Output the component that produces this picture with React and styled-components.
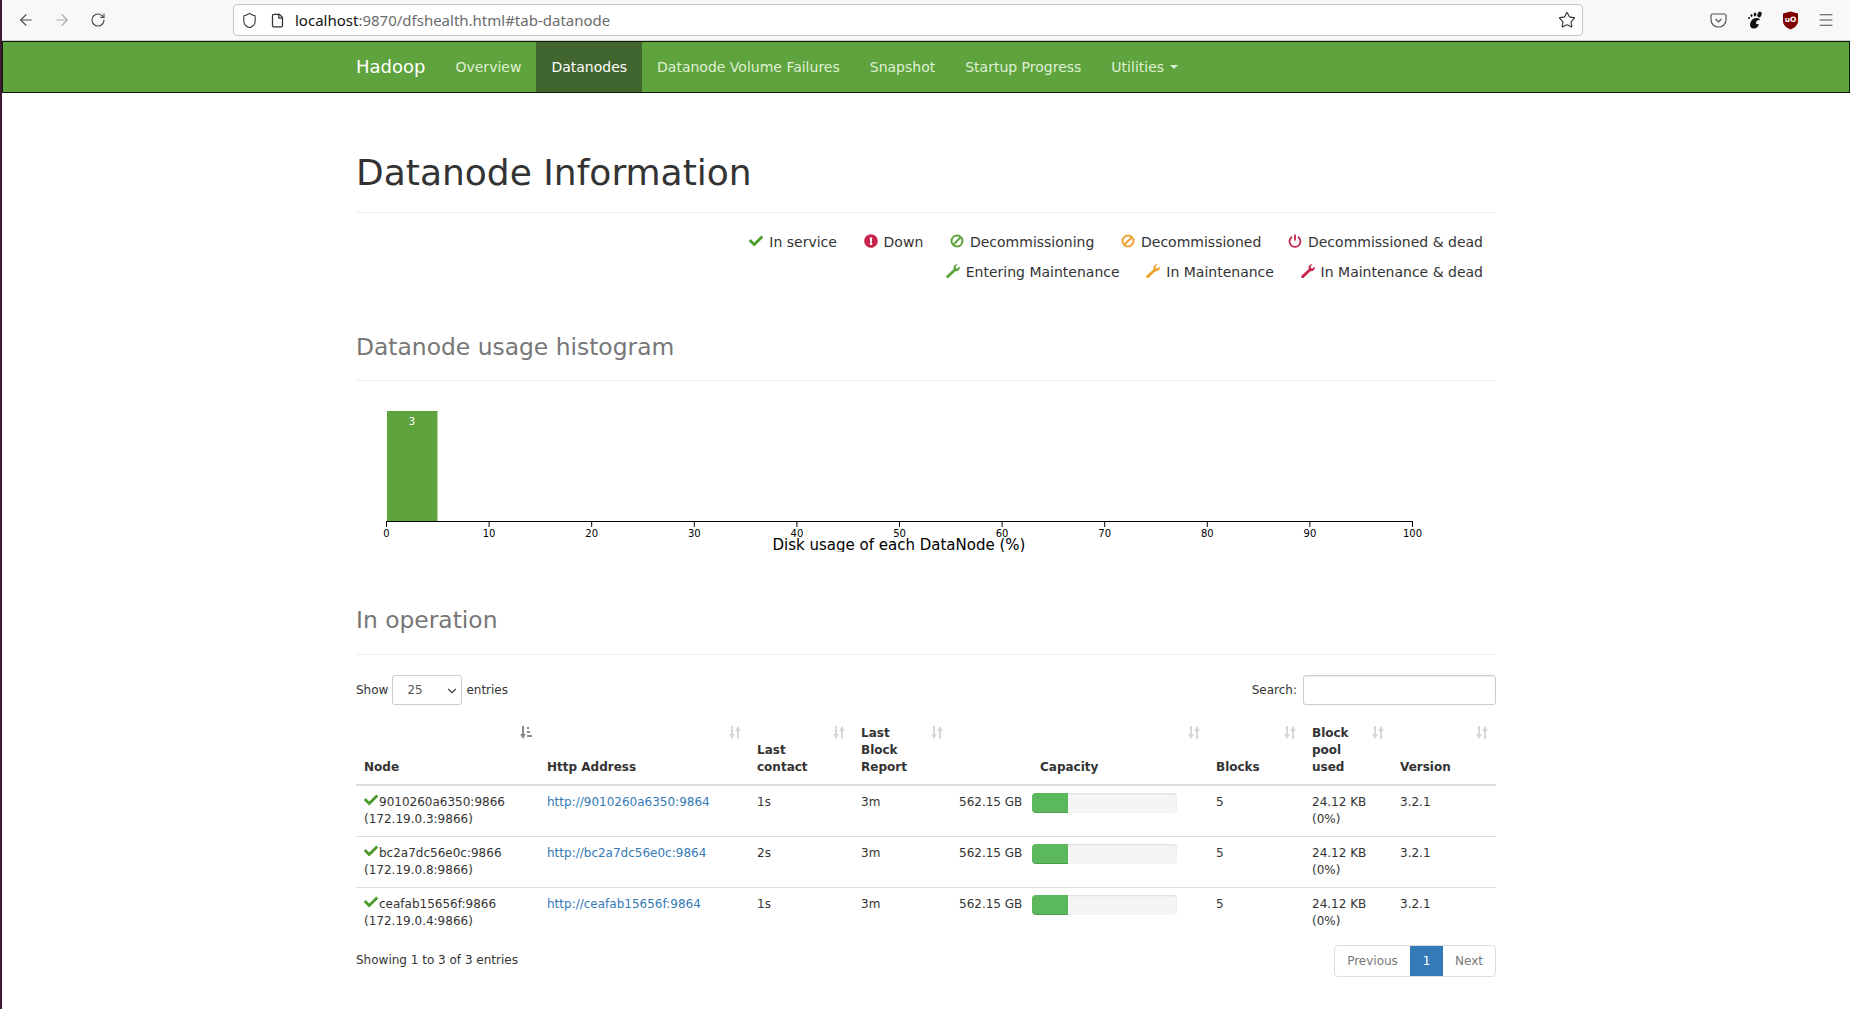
import React from 'react'
import styled, { createGlobalStyle } from 'styled-components'
import { ArrowLeft, ArrowRight, RotateCw, Shield, File, Star, Menu, ChevronDown } from 'lucide-react'
import { FaCheck, FaExclamationCircle } from 'react-icons/fa'

const GlobalStyle = createGlobalStyle`
  html, body { margin: 0; padding: 0; background: #fff; }
  body {
    font-family: "DejaVu Sans", sans-serif;
    font-size: 12px;
    line-height: 17px;
    color: #333;
    overflow: hidden;
  }
  * { box-sizing: border-box; }
`

const Frame = styled.div`
  height: 1009px;
  border-left: 2px solid #3c1a30;
  overflow: hidden;
`

const Browser = styled.div`
  height: 41px;
  background: #f8f8f8;
  border-bottom: 1px solid #cfcfcf;
  display: flex;
  align-items: center;
  padding-left: 6px;
  padding-right: 14px;
`

const ToolButton = styled.div`
  width: 36px;
  height: 30px;
  display: flex;
  align-items: center;
  justify-content: center;
  color: ${p => (p.$dim ? '#a9a9ab' : '#4a4a4f')};
`

const UrlBar = styled.div`
  margin-left: 117px;
  width: 1350px;
  height: 32px;
  background: #fff;
  border: 1px solid #c8c8c8;
  border-radius: 4px;
  display: flex;
  align-items: center;
  gap: 12px;
  padding: 0 6px 0 7px;
  color: #333;
`

const UrlText = styled.div`
  margin-left: -2px;
  flex: 1;
  font-family: "Noto Sans", sans-serif;
  font-size: 15px;
  color: #6b6b6b;
  span { color: #111; }
`

const ExtIcons = styled.div`
  margin-left: auto;
  display: flex;
  align-items: center;
  gap: 16px;
  color: #4a4a4f;
`

const ExtIcon = styled.div`
  width: 20px;
  height: 20px;
  display: flex;
  align-items: center;
  justify-content: center;
`

const Navbar = styled.nav`
  height: 52px;
  background: #5fa33e;
  border: 1px solid #0e1a08;
`

const Container = styled.div`
  width: 1170px;
  margin: 0 auto;
  padding: 0 15px;
`

const NavRow = styled.div`
  display: flex;
  height: 50px;
  align-items: stretch;
`

const Brand = styled.a`
  font-size: 18px;
  line-height: 50px;
  color: #fff;
  margin-right: 15px;
`

const NavItem = styled.a`
  padding: 0 15px;
  line-height: 50px;
  font-size: 14px;
  color: ${p => (p.$active ? '#fff' : '#dff0d2')};
  background: ${p => (p.$active ? '#41652f' : 'transparent')};
  display: flex;
  align-items: center;
`

const Caret = styled.span`
  display: inline-block;
  margin-left: 6px;
  width: 0;
  height: 0;
  border-top: 4px solid #dff0d2;
  border-left: 4px solid transparent;
  border-right: 4px solid transparent;
`

const PageTitle = styled.h1`
  font-size: 36px;
  font-weight: 400;
  line-height: 40px;
  margin: 0;
  padding: 60px 0 19px;
  border-bottom: 1px solid #eee;
  color: #333;
`

const Legend = styled.ul`
  list-style: none;
  margin: 0;
  padding: 20px 13px 0 0;
  display: flex;
  flex-direction: column;
  align-items: flex-end;
  gap: 11px;
`

const LegendRow = styled.li`
  display: flex;
  gap: 26.7px;
  height: 19px;
  align-items: center;
`

const LegendItem = styled.span`
  display: flex;
  align-items: center;
  gap: 6px;
  font-size: 14px;
  color: #333;
  svg { color: ${p => p.$color}; position: relative; top: -2px; }
`

const SectionTitle = styled.h3`
  font-size: 23.4px;
  font-weight: 400;
  line-height: 26px;
  color: #777;
  margin: 0;
  padding: ${p => p.$top}px 0 ${p => p.$bottom}px;
  border-bottom: 1px solid #eee;
`

const Histogram = styled.svg`
  display: block;
  margin-top: 17px;
  width: 1140px;
  height: 154px;
  font-family: "DejaVu Sans", sans-serif;
`

const Controls = styled.div`
  margin-top: 20px;
  display: flex;
  justify-content: space-between;
  align-items: center;
  height: 30px;
`

const ControlLabel = styled.label`
  display: flex;
  align-items: center;
  gap: 4px;
  line-height: 15px;
  position: relative;
`

const SelectBox = styled.div`
  position: relative;
  width: 70px;
  height: 30px;
  border: 1px solid #ccc;
  border-radius: 3px;
  padding-left: 14px;
  line-height: 29px;
  color: #555;
  svg { position: absolute; right: 2px; top: 8px; color: #444; }
`

const SearchInput = styled.input`
  width: 193px;
  height: 30px;
  border: 1px solid #ccc;
  border-radius: 3px;
  margin-left: 2px;
  box-shadow: inset 0 1px 1px rgba(0, 0, 0, 0.075);
`

const Table = styled.table`
  margin-top: 12px;
  width: 1140px;
  table-layout: fixed;
  border-collapse: collapse;
`

const Th = styled.th`
  position: relative;
  padding: 8px;
  padding-left: ${p => p.$indent || 8}px;
  text-align: left;
  vertical-align: bottom;
  font-weight: 700;
  border-bottom: 2px solid #ddd;
`

const SortIcon = styled.svg`
  position: absolute;
  top: 9px;
  right: ${p => (p.$on ? 7 : 8)}px;
  color: ${p => (p.$on ? '#8a8a8a' : '#d6d6d6')};
`

const Td = styled.td`
  padding: 8px;
  vertical-align: top;
  border-bottom: ${p => (p.$last ? 'none' : '1px solid #ddd')};
`

const NodeCheck = styled(FaCheck)`
  color: #4c9a2a;
  margin-right: 1px;
  vertical-align: -2px;
  position: relative;
  top: -1px;
`

const Link = styled.a`
  color: #337ab7;
`

const CapacityCell = styled.div`
  display: flex;
  gap: 10px;
`

const Progress = styled.div`
  width: 145px;
  height: 20px;
  background: #f5f5f5;
  border-radius: 4px;
  overflow: hidden;
  box-shadow: inset 0 1px 2px rgba(0, 0, 0, 0.1);
  margin-top: -1px;
`

const ProgressFill = styled.div`
  height: 100%;
  background: #5cb85c;
  box-shadow: inset 0 -1px 0 rgba(0, 0, 0, 0.15);
`

const Footer = styled.div`
  display: flex;
  justify-content: space-between;
  align-items: flex-start;
  margin-top: 7px;
`

const FooterInfo = styled.div`
  padding-top: 7px;
`

const Pagination = styled.div`
  display: flex;
  height: 32px;
  border: 1px solid #ddd;
  border-radius: 4px;
`

const PageLink = styled.a`
  display: flex;
  align-items: center;
  justify-content: center;
  width: ${p => p.$w}px;
  color: ${p => (p.$active ? '#fff' : '#777')};
  background: ${p => (p.$active ? '#337ab7' : 'transparent')};
`

const nodes = [
  { name: '9010260a6350', ip: '172.19.0.3', contact: '1s', used: 24.5 },
  { name: 'bc2a7dc56e0c', ip: '172.19.0.8', contact: '2s', used: 24.5 },
  { name: 'ceafab15656f', ip: '172.19.0.4', contact: '1s', used: 24.5 },
]

const columns = [
  { w: 183, label: ['Node'], on: true },
  { w: 210, label: ['Http Address'] },
  { w: 104, label: ['Last', 'contact'] },
  { w: 98, label: ['Last', 'Block', 'Report'] },
  { w: 257, label: ['Capacity'], indent: 89 },
  { w: 96, label: ['Blocks'] },
  { w: 88, label: ['Block', 'pool', 'used'] },
  { w: 104, label: ['Version'] },
]

const ticks = [0, 10, 20, 30, 40, 50, 60, 70, 80, 90, 100]

function Sort({ on }) {
  return (
    <SortIcon $on={on} width="13" height="13" viewBox="0 0 13 13" fill="currentColor">
      <path d="M3 0h2v8h2l-3 5-3-5h2z" />
      {on ? (
        <path d="M8 1h2v2H8zM8 5h3v2H8zM8 9h5v2H8z" />
      ) : (
        <path d="M9 13h2V5h2l-3-5-3 5h2z" />
      )}
    </SortIcon>
  )
}

function BanIcon() {
  return (
    <svg width="14" height="14" viewBox="0 0 14 14" fill="none" stroke="currentColor" strokeWidth="2">
      <circle cx="7" cy="7" r="5.500" />
      <path d="M3 11L11 3" />
    </svg>
  )
}

function PowerIcon() {
  return (
    <svg width="14" height="14" viewBox="0 0 14 14" fill="none" stroke="currentColor" strokeWidth="1.8">
      <path d="M4 2.800a5.500 5.500 0 1 0 6 0" />
      <path d="M7 0.500V6.500" />
    </svg>
  )
}

function WrenchIcon() {
  return (
    <svg width="14" height="14" viewBox="0 0 14 14" fill="currentColor">
      <path d="M11.500 0a3.800 3.800 0 0 0-3.700 5L.4 11.800a1.500 1.500 0 0 0 2 2.100L9.400 7.200a3.800 3.800 0 0 0 4.400-4.700L11.600 4.600 10 4.200 9.600 2.600z" />
    </svg>
  )
}

function PocketIcon() {
  return (
    <svg width="17" height="17" viewBox="0 0 17 17" fill="none" stroke="#55555a" strokeWidth="1.2">
      <path d="M2.5 2h12a1.5 1.5 0 0 1 1.5 1.5V8a7.5 7 0 0 1-15 0V3.5A1.5 1.5 0 0 1 2.5 2z" />
      <path d="M5.5 7l3 3 3-3" />
    </svg>
  )
}

function FootIcon() {
  return (
    <svg width="17" height="19" viewBox="0 0 17 19" fill="#111">
      <path d="M7 8c3-2 7-1 7 1-2 0-4 .5-4 3 0 1.500 2 1.500 3 1-.5 3-3 5-6 4.500C3 17 3 11 7 8z" />
      <ellipse cx="13.500" cy="3.500" rx="2" ry="3" transform="rotate(20 13.500 3.500)" />
      <ellipse cx="9" cy="3.500" rx="1.300" ry="2" />
      <ellipse cx="5.500" cy="4.500" rx="1" ry="1.500" />
      <circle cx="3" cy="7" r="1" />
    </svg>
  )
}

function OriginIcon() {
  return (
    <svg width="17" height="19" viewBox="0 0 17 19">
      <path d="M8.500 0.500L16 2.500V10c0 4-3.500 7-7.500 8.500C4.500 17 1 14 1 10V2.500z" fill="#800000" />
      <text x="8.500" y="11" textAnchor="middle" fontSize="7.500" fontWeight="700" fill="#fff" fontFamily="DejaVu Sans">uO</text>
    </svg>
  )
}

export default function App() {
  return (
    <Frame>
      <GlobalStyle />
      <Browser>
        <ToolButton><ArrowLeft size={18} strokeWidth={1.5} /></ToolButton>
        <ToolButton $dim><ArrowRight size={18} strokeWidth={1.5} /></ToolButton>
        <ToolButton><RotateCw size={16} strokeWidth={1.7} /></ToolButton>
        <UrlBar>
          <Shield size={17} strokeWidth={1.5} />
          <File size={15} strokeWidth={2} />
          <UrlText><span>localhost</span>:9870/dfshealth.html#tab-datanode</UrlText>
          <Star size={18} strokeWidth={1.5} />
        </UrlBar>
        <ExtIcons>
          <ExtIcon><PocketIcon /></ExtIcon>
          <ExtIcon><FootIcon /></ExtIcon>
          <ExtIcon><OriginIcon /></ExtIcon>
          <ExtIcon><Menu size={18} strokeWidth={1.4} /></ExtIcon>
        </ExtIcons>
      </Browser>

      <Navbar>
        <Container>
          <NavRow>
            <Brand>Hadoop</Brand>
            <NavItem>Overview</NavItem>
            <NavItem $active>Datanodes</NavItem>
            <NavItem>Datanode Volume Failures</NavItem>
            <NavItem>Snapshot</NavItem>
            <NavItem>Startup Progress</NavItem>
            <NavItem>Utilities<Caret /></NavItem>
          </NavRow>
        </Container>
      </Navbar>

      <Container>
        <PageTitle>Datanode Information</PageTitle>
        <Legend>
          <LegendRow>
            <LegendItem $color="#4c9a2a"><FaCheck size={14} />In service</LegendItem>
            <LegendItem $color="#c7254e"><FaExclamationCircle size={14} />Down</LegendItem>
            <LegendItem $color="#5fa33e"><BanIcon />Decommissioning</LegendItem>
            <LegendItem $color="#f0a030"><BanIcon />Decommissioned</LegendItem>
            <LegendItem $color="#c7254e"><PowerIcon />Decommissioned &amp; dead</LegendItem>
          </LegendRow>
          <LegendRow>
            <LegendItem $color="#5fa33e"><WrenchIcon />Entering Maintenance</LegendItem>
            <LegendItem $color="#f0a030"><WrenchIcon />In Maintenance</LegendItem>
            <LegendItem $color="#c7254e"><WrenchIcon />In Maintenance &amp; dead</LegendItem>
          </LegendRow>
        </Legend>

        <SectionTitle $top={52} $bottom={20}>Datanode usage histogram</SectionTitle>
        <Histogram viewBox="0 0 1140 154">
          <rect x="31" y="13" width="50.500" height="110" fill="#5fa33e" />
          <text x="56" y="27" textAnchor="middle" fontSize="10" fill="#fff">3</text>
          <path d="M30.500 129V123.500H1056.500V129" fill="none" stroke="#000" />
          {ticks.map(t => (
            <g key={t}>
              <line x1={30.5 + t * 10.26} x2={30.5 + t * 10.26} y1="123" y2="129" stroke="#000" />
              <text x={30.5 + t * 10.26} y="139" textAnchor="middle" fontSize="10" fill="#000">{t}</text>
            </g>
          ))}
          <text x="543" y="152" textAnchor="middle" fontSize="15" fill="#000">Disk usage of each DataNode (%)</text>
        </Histogram>

        <SectionTitle $top={55} $bottom={21}>In operation</SectionTitle>
        <Controls>
          <ControlLabel>
            Show
            <SelectBox>25<ChevronDown size={14} /></SelectBox>
            entries
          </ControlLabel>
          <ControlLabel>
            Search:
            <SearchInput />
          </ControlLabel>
        </Controls>

        <Table>
          <colgroup>
            {columns.map((c, i) => <col key={i} width={c.w} />)}
          </colgroup>
          <thead>
            <tr>
              {columns.map((c, i) => (
                <Th key={i} $indent={c.indent}>
                  {c.label.map((l, j) => <div key={j}>{l}</div>)}
                  <Sort on={c.on} />
                </Th>
              ))}
            </tr>
          </thead>
          <tbody>
            {nodes.map((n, i) => (
              <tr key={n.name}>
                <Td $last={i === 2}>
                  <NodeCheck size={14} />{n.name}:9866<br />({n.ip}:9866)
                </Td>
                <Td $last={i === 2}><Link>http://{n.name}:9864</Link></Td>
                <Td $last={i === 2}>{n.contact}</Td>
                <Td $last={i === 2}>3m</Td>
                <Td $last={i === 2}>
                  <CapacityCell>
                    562.15 GB
                    <Progress><ProgressFill style={{ width: `${n.used}%` }} /></Progress>
                  </CapacityCell>
                </Td>
                <Td $last={i === 2}>5</Td>
                <Td $last={i === 2}>24.12 KB<br />(0%)</Td>
                <Td $last={i === 2}>3.2.1</Td>
              </tr>
            ))}
          </tbody>
        </Table>

        <Footer>
          <FooterInfo>Showing 1 to 3 of 3 entries</FooterInfo>
          <Pagination>
            <PageLink $w={75}>Previous</PageLink>
            <PageLink $w={33} $active>1</PageLink>
            <PageLink $w={52}>Next</PageLink>
          </Pagination>
        </Footer>
      </Container>
    </Frame>
  )
}
